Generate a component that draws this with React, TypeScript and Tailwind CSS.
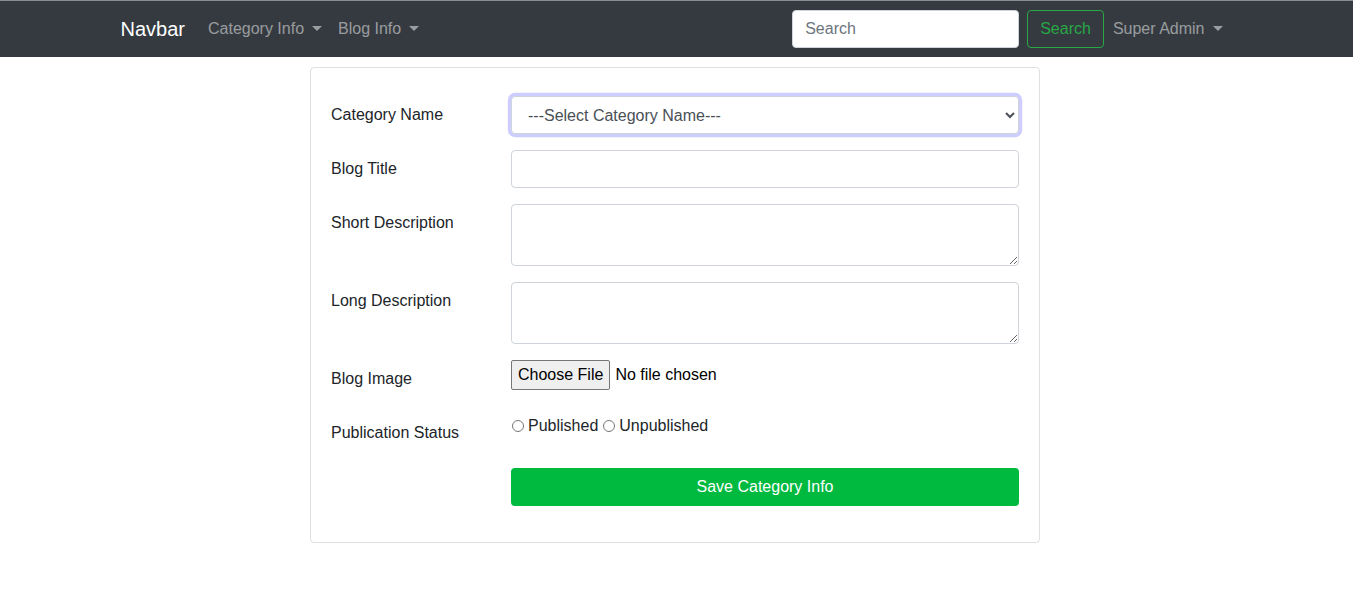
import React from 'react';

const Caret = () => (
  <span className="ml-[8px] inline-block align-[3px] border-t-[5px] border-x-[5px] border-t-current border-x-transparent" />
);

const labelCls = 'w-[180px] shrink-0 pt-[7px] pb-[7px] leading-6';
const inputCls =
  'block w-full rounded-[4px] border border-[#ced4da] bg-white px-3 py-[6px] text-base leading-6 text-[#495057] outline-none';

const App: React.FC = () => {
  return (
    <div className="min-h-[601px] bg-white text-base text-[#212529] font-['Liberation_Sans',Arial,sans-serif]">
      {/* Navbar */}
      <nav className="h-[57px] bg-[#343a40] border-t border-[#8a8d91]">
        <div className="mx-auto flex h-full w-[1140px] items-center px-[14px]">
          <span className="mr-[15px] text-xl leading-[30px] text-white">Navbar</span>
          <span className="px-2 py-2 text-[rgba(255,255,255,0.5)]">
            Category Info
            <Caret />
          </span>
          <span className="px-2 py-2 text-[rgba(255,255,255,0.5)]">
            Blog Info
            <Caret />
          </span>
          <div className="ml-auto flex items-center">
            <input
              placeholder="Search"
              className="h-[38px] w-[227px] rounded-[4px] border border-[#ced4da] bg-white px-3 text-base text-[#495057] placeholder:text-[#6c757d] outline-none"
            />
            <button className="ml-2 h-[38px] rounded-[4px] border border-[#28a745] px-3 text-base text-[#28a745]">
              Search
            </button>
            <span className="ml-[1px] mr-[2px] px-2 py-2 text-[rgba(255,255,255,0.5)]">
              Super Admin
              <Caret />
            </span>
          </div>
        </div>
      </nav>

      {/* Card */}
      <div className="flex justify-center pt-[10px]">
        <div className="ml-[-3px] w-[730px] rounded-[4px] border border-[rgba(0,0,0,0.125)] px-5 pt-[28px] pb-[20px]">
          <form className="flex flex-col">
            <div className="mb-4 flex">
              <label className={labelCls}>Category Name</label>
              <select
                defaultValue=""
                className={`${inputCls} h-[38px] border-[#80a8ff] shadow-[0_0_0_3.2px_#cdcdff]`}
              >
                <option value="">---Select Category Name---</option>
              </select>
            </div>
            <div className="mb-4 flex">
              <label className={labelCls}>Blog Title</label>
              <input className={`${inputCls} h-[38px]`} />
            </div>
            <div className="mb-4 flex">
              <label className={labelCls}>Short Description</label>
              <textarea className={`${inputCls} h-[62px]`} />
            </div>
            <div className="mb-4 flex">
              <label className={labelCls}>Long Description</label>
              <textarea className={`${inputCls} h-[62px]`} />
            </div>
            <div className="mb-4 flex">
              <label className={labelCls}>Blog Image</label>
              <div className="w-full">
                <input
                  type="file"
                  className="block w-full text-base leading-6 file:mr-[5px] file:rounded-[2px] file:border file:border-[#767676] file:bg-[#efefef] file:px-[6px] file:py-[2px] file:text-[#000] text-[#000]"
                />
              </div>
            </div>
            <div className="mb-4 flex">
              <label className={labelCls}>Publication Status</label>
              <div className="flex h-[24px] items-center leading-6">
                <input type="radio" name="status" className="m-0 mr-[4px] ml-[1px] h-[12px] w-[12px]" />
                <span>Published</span>
                <input type="radio" name="status" className="m-0 mr-[4px] ml-[5px] h-[12px] w-[12px]" />
                <span>Unpublished</span>
              </div>
            </div>
            <div className="mb-4 flex">
              <div className="w-[180px] shrink-0" />
              <button
                type="button"
                className="h-[38px] w-full rounded-[4px] bg-[#00b93f] text-base text-white"
              >
                Save Category Info
              </button>
            </div>
          </form>
        </div>
      </div>
    </div>
  );
};

export default App;
